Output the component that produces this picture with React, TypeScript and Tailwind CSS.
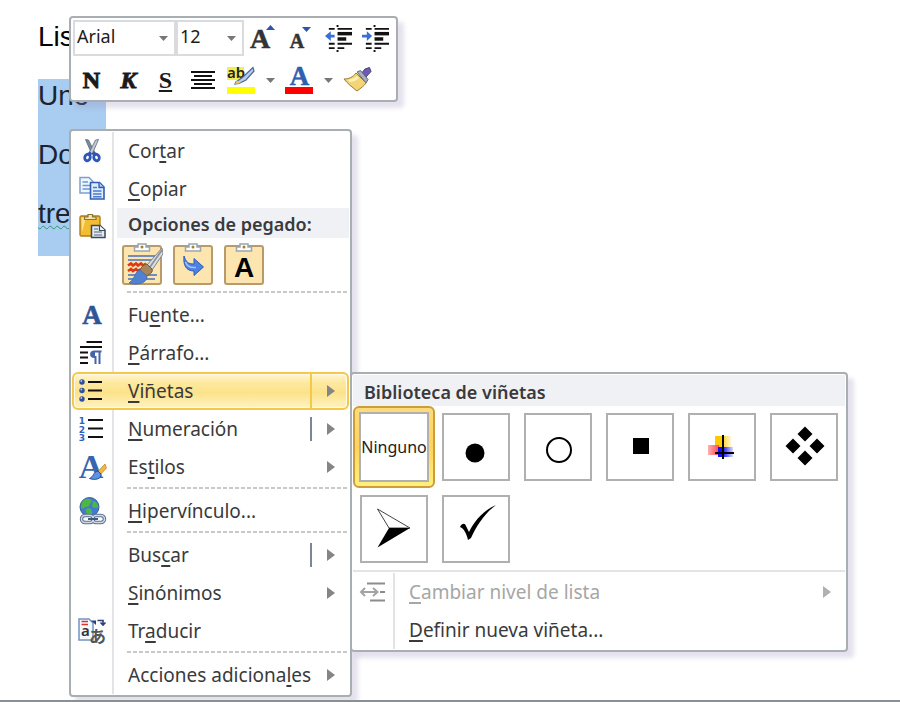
import React from "react";

type IconProps = { children: React.ReactNode; size?: number };

function Icon({ children, size = 28 }: IconProps) {
  return (
    <svg width={size} height={size} viewBox="0 0 28 28" fill="none" overflow="visible" aria-hidden="true">
      {children}
    </svg>
  );
}

/* Menu icons */

const CutIcon = () => (
  <Icon>
    <path d="M7.5 2.5 L10.5 3 L16.5 15 L14 17.5 Z" fill="#7d8a99" stroke="#5b6775" strokeWidth="0.8" />
    <path d="M20.5 2.5 L17.5 3 L11.5 15 L14 17.5 Z" fill="#c3ccd6" stroke="#5b6775" strokeWidth="0.8" />
    <path d="M13 15.5 L10 18 M15 15.5 L18 18" stroke="#2d56b8" strokeWidth="3.4" />
    <ellipse cx="9.5" cy="20.5" rx="2.7" ry="3.3" stroke="#2d56b8" strokeWidth="2.8" transform="rotate(20 9.5 20.5)" />
    <ellipse cx="18.5" cy="20.5" rx="2.7" ry="3.3" stroke="#2d56b8" strokeWidth="2.8" transform="rotate(-20 18.5 20.5)" />
  </Icon>
);

const CopyIcon = () => (
  <Icon>
    <path d="M2 2.5 H11 L15 6.5 V18 H2 Z" fill="#f0f6fe" stroke="#7d9fd0" strokeWidth="1.5" />
    <path d="M4.5 7 H10 M4.5 10.5 H12 M4.5 14 H12" stroke="#6d97d6" strokeWidth="1.5" />
    <path d="M12.5 7.5 H21.5 L26 12 V24 H12.5 Z" fill="#dfeafb" stroke="#2f5fb5" strokeWidth="1.6" />
    <path d="M21 7.5 V12.5 H26" fill="#a8c5ee" stroke="#2f5fb5" strokeWidth="1.3" />
    <path d="M15 12.5 H19 M15 16 H23.5 M15 19 H23.5 M15 21.8 H23.5" stroke="#4a7cd0" strokeWidth="1.5" />
  </Icon>
);

const PasteIcon = () => (
  <Icon>
    <rect x="2" y="4" width="20" height="20" rx="1.5" fill="#f3bd32" stroke="#b07d17" strokeWidth="1.4" />
    <path d="M3.5 5.5 H8 L4 20 Z" fill="#fde28a" />
    <path d="M6.5 7.5 V5 H10 V2.5 H14.5 V5 H18 V7.5 Z" fill="#f5e6b0" stroke="#8a7434" strokeWidth="1.2" />
    <path d="M13.5 13.5 H22 L27 18 V25.5 H13.5 Z" fill="#e4eaf2" stroke="#3a4a5f" strokeWidth="1.5" />
    <path d="M21.5 13.5 V18.5 H27" fill="#fff" stroke="#3a4a5f" strokeWidth="1.2" />
    <path d="M16 17 H20 M16 20 H24 M16 23 H24" stroke="#53657d" strokeWidth="1.2" />
  </Icon>
);

const FontIcon = () => (
  <Icon>
    <text x="14" y="23" textAnchor="middle" fontFamily="Liberation Serif, serif" fontWeight="700" fontSize="27" fill="#2f5597" stroke="#2f5597" strokeWidth="0.6">A</text>
  </Icon>
);

const ParagraphIcon = () => (
  <Icon>
    <path d="M8.5 3 H24 M2 8 H24 M2 13.5 H10 M2 18.5 H10 M2 24 H10" stroke="#111" strokeWidth="2" />
    <path d="M23.5 12.5 H16.5 C12 12.5 12 18 16.5 18 H17.5 V25 M21.5 12.5 V25" stroke="#4464a8" strokeWidth="2" />
    <path d="M17 12.5 C12.5 12.5 12.5 18 17 18 Z" fill="#4464a8" />
  </Icon>
);

const BulletsIcon = () => (
  <Icon>
    {[5, 13.5, 22].map((y) => (
      <g key={y}>
        <circle cx="4" cy={y} r="2.7" fill="#2c4fa0" />
        <circle cx="3.3" cy={y - 1} r="0.9" fill="#b5c8f0" />
        <path d={`M10 ${y} H24`} stroke="#111" strokeWidth="2" />
      </g>
    ))}
  </Icon>
);

const NumberingIcon = () => (
  <Icon>
    {["1", "2", "3"].map((n, i) => (
      <g key={n}>
        <text x="4" y={9 + i * 8.5} textAnchor="middle" fontFamily="DejaVu Sans, sans-serif" fontWeight="700" fontSize="9" fill="#2f5fc0">{n}</text>
        <path d={`M10 ${5 + i * 8.5} H25`} stroke="#111" strokeWidth="2" />
      </g>
    ))}
  </Icon>
);

const StylesIcon = () => (
  <Icon>
    <text x="13" y="25" textAnchor="middle" fontFamily="Liberation Serif, serif" fontWeight="700" fontSize="34" fill="#3766b0">A</text>
    <path d="M27 11 L20 18.5 L22.5 21.5 L28.500 15 Z" fill="#f1b83f" stroke="#b87e20" strokeWidth="0.7" />
    <path d="M20 18 C15 19 16 23.500 11.5 25.5 C17 27.5 24 26 23 21 Z" fill="#5c93e0" stroke="#214a9c" strokeWidth="1" />
  </Icon>
);

const LinkIcon = () => (
  <Icon>
    <circle cx="11.5" cy="10" r="9.5" fill="#3f7bd0" stroke="#3a5f96" strokeWidth="1" />
    <path d="M4 5 C7 1 12 1 14 4 C12 6 12.5 8 9.5 10 C7 9 6 13 3 11 Z" fill="#4fb544" />
    <path d="M15 4 C19 4 20 8 20.5 11 C17.5 10 16 12 14 9 Z M8 12 C12 10 15.5 13 13.5 18 C10 19 7 16 8 12 Z" fill="#4fb544" />
    <rect x="3.5" y="18.500" width="12" height="7" rx="3.5" stroke="#5b6f8f" strokeWidth="3.4" />
    <rect x="14.5" y="18.500" width="12" height="7" rx="3.5" stroke="#5b6f8f" strokeWidth="3.4" />
    <rect x="3.5" y="18.500" width="12" height="7" rx="3.5" stroke="#cfd9e8" strokeWidth="1.5" />
    <rect x="14.5" y="18.500" width="12" height="7" rx="3.5" stroke="#cfd9e8" strokeWidth="1.5" />
    <path d="M10 22 H20" stroke="#44587a" strokeWidth="2" />
  </Icon>
);

const TranslateIcon = () => (
  <Icon>
    <path d="M1 2 H11 L15 6 V23 H1 Z" fill="#f5f9ff" stroke="#7293c4" strokeWidth="1.5" />
    <path d="M3.5 4.5 H10 M3.5 7.5 H10" stroke="#d8352c" strokeWidth="1.7" />
    <path d="M13 3.5 H18 V8 Z" fill="#2b3f78" />
    <path d="M19.500 3.500 H25 V7 M22.5 5.500 L25 8 L27.5 5.500" stroke="#2b3f78" strokeWidth="1.6" />
    <text x="7.5" y="19" textAnchor="middle" fontFamily="Noto Sans, sans-serif" fontWeight="600" fontSize="15" fill="#333">a</text>
    <text x="19.5" y="26" textAnchor="middle" fontFamily="Noto Sans CJK JP, sans-serif" fontWeight="700" fontSize="17" fill="#555">あ</text>
  </Icon>
);

const LevelIcon = () => (
  <Icon>
    <path d="M8 5.5 H26 M21 14 H26 M11 22.5 H26" stroke="#8c8c8c" strokeWidth="2" />
    <path d="M2 14 H19 M6 10 L2 14 L6 18 M14 10 L18.5 14 L14 18" stroke="#a3a3a3" strokeWidth="2" />
  </Icon>
);

/* Paste option pictures */

function Clipboard({ children }: { children: React.ReactNode }) {
  return (
    <svg width="41" height="43" viewBox="0 0 41 43" fill="none" aria-hidden="true">
      <rect x="1" y="3" width="38" height="38" rx="2" fill="#fde5b0" stroke="#b99a6b" strokeWidth="2" />
      <path d="M12.5 8 V4 H16 V1 H24 V4 H27.5 V8 Z" fill="#fff" stroke="#9aa5ae" strokeWidth="1.5" />
      <circle cx="20" cy="4" r="1.5" fill="#a3812f" />
      {children}
    </svg>
  );
}

const KeepFormat = () => (
  <Clipboard>
    <path d="M6 13 H33 M6 17 H33 M6 32 H35 M6 36 H33" stroke="#4571b8" strokeWidth="1.7" />
    <path d="M6 22.500 l3 -2 l2 2 l3 -2 l2 2 l3 -2 l2 2 l3 -2 M6 28 l3 -2 l2 2 l3 -2 l2 2 l3 -2" stroke="#d93a17" strokeWidth="2.6" />
    <path d="M40 5 L25 22 L30 27 L41 11 Z" fill="#d9dde1" stroke="#7f868e" strokeWidth="1" />
    <path d="M40 7 L28 24" stroke="#8b9299" strokeWidth="1.7" />
    <path d="M25 21 C20 22 19 25 18 28 L24 33 C29 31 31 29 30 26 Z" fill="#a8855a" stroke="#765b39" strokeWidth="1" />
    <path d="M18 27 C13 28 13 36 7 40 C15 43 26 40 25 33 Z" fill="#4f82d2" stroke="#4268ae" strokeWidth="0.8" />
  </Clipboard>
);

const MergeFormat = () => (
  <Clipboard>
    <path d="M11 13 C13 19 15 21 21 21 V15.500 L30.500 24 L21 32.500 V28 C13 28 10 22 11 13 Z" fill="#4d82e2" stroke="#2f5db8" strokeWidth="1" />
    <path d="M12.5 19 C14 24 18 25 23 24.5" stroke="#a4c4fa" strokeWidth="1.5" />
  </Clipboard>
);

const TextOnly = () => (
  <Clipboard>
    <text x="20" y="34" textAnchor="middle" fontFamily="Liberation Sans, sans-serif" fontWeight="700" fontSize="28" fill="#000">A</text>
  </Clipboard>
);

/* Shared menu parts */

const menuFrame =
  "absolute rounded border-2 border-[#a9aeb3] bg-white p-px shadow-[6px_6px_4px_rgba(150,140,185,0.25)]";

function Triangle({ className }: { className: string }) {
  return (
    <svg width="8" height="12" viewBox="0 0 8 12" className={className} aria-hidden="true">
      <path d="M0 0 L8 6 L0 12 Z" fill="currentColor" />
    </svg>
  );
}

type ItemProps = {
  icon?: React.ReactNode;
  before?: string;
  hot: string;
  after: string;
  arrow?: boolean;
  split?: boolean;
  active?: boolean;
  disabled?: boolean;
};

function MenuItem({ icon, before = "", hot, after, arrow, split, active, disabled }: ItemProps) {
  return (
    <button
      type="button"
      role="menuitem"
      disabled={disabled}
      className={`flex h-[38px] w-full items-stretch text-left text-[19px] leading-7 ${
        active
          ? "rounded-md border-2 border-[#f3c84b] bg-[linear-gradient(180deg,#fff6d2_0%,#fde9a0_25%,#fce28a_55%,#fff3c4_100%)] shadow-[inset_0_0_0_1px_#fffbe8]"
          : ""
      } ${disabled ? "text-[#a6a6a6]" : "text-[#3a3a3c]"}`}
    >
      <span
        className={`flex shrink-0 items-center border-r-2 ${
          active ? "w-[40px] border-transparent pl-[4px]" : "w-[42px] border-[#e2e4e8] pl-[6px]"
        }`}
      >
        {icon}
      </span>
      <span className="flex flex-1 items-center pl-[14px] whitespace-nowrap">
        <span>
          {before}
          <u className="decoration-2 underline-offset-3">{hot}</u>
          {after}
        </span>
      </span>
      {split && <span className={active ? "w-[2px] bg-[#f3c84b]" : "my-[7px] w-[2px] bg-[#7b8794]"} />}
      {arrow && (
        <span
          className={`flex items-center ${active ? "w-[35px] pl-[15px]" : split ? "w-[37px] pl-[15px]" : "w-[22px]"}`}
        >
          <Triangle className={disabled ? "text-[#b0b0b0]" : "text-[#858585]"} />
        </span>
      )}
    </button>
  );
}

function Separator() {
  return (
    <div role="separator" className="flex h-[6px]">
      <span className="w-[42px] shrink-0 border-r-2 border-[#e2e4e8]" />
      <span className="mt-px ml-[13px] h-[2px] flex-1 bg-[repeating-linear-gradient(90deg,#c9c9c9_0_4px,transparent_4px_6px)]" />
    </div>
  );
}

function ContextMenu() {
  return (
    <div role="menu" className={`${menuFrame} top-[129px] left-[69px] z-10 w-[283px]`}>
      <MenuItem icon={<CutIcon />} before="Cor" hot="t" after="ar" />
      <MenuItem icon={<CopyIcon />} hot="C" after="opiar" />
      <div className="flex h-[82px]">
        <span className="w-[42px] shrink-0 border-r-2 border-[#e2e4e8] pt-1 pl-[6px]">
          <PasteIcon />
        </span>
        <div className="flex-1">
          <h2 className="ml-[3px] flex h-[30px] items-center bg-[#f0f1f5] pt-[2px] pl-[11px] text-lg font-semibold text-[#3a3a3c]">
            Opciones de pegado:
          </h2>
          <div className="flex gap-[10px] pt-[5px] pl-[8px]">
            <button type="button" aria-label="Mantener formato de origen"><KeepFormat /></button>
            <button type="button" aria-label="Combinar formato"><MergeFormat /></button>
            <button type="button" aria-label="Mantener solo texto"><TextOnly /></button>
          </div>
        </div>
      </div>
      <Separator />
      <MenuItem icon={<FontIcon />} before="Fu" hot="e" after="nte..." />
      <MenuItem icon={<ParagraphIcon />} hot="P" after="árrafo..." />
      <MenuItem icon={<BulletsIcon />} hot="V" after="iñetas" arrow split active />
      <MenuItem icon={<NumberingIcon />} hot="N" after="umeración" arrow split />
      <MenuItem icon={<StylesIcon />} before="Es" hot="t" after="ilos" arrow />
      <Separator />
      <MenuItem icon={<LinkIcon />} hot="H" after="ipervínculo..." />
      <Separator />
      <MenuItem before="Bus" hot="c" after="ar" arrow split />
      <MenuItem hot="S" after="inónimos" arrow />
      <MenuItem icon={<TranslateIcon />} before="Tr" hot="a" after="ducir" />
      <Separator />
      <MenuItem before="Acciones adiciona" hot="l" after="es" arrow />
    </div>
  );
}

/* Bullet library */

const bullets: { name: string; art: React.ReactNode }[] = [
  { name: "Círculo relleno", art: <circle cx="33" cy="40" r="9.5" /> },
  { name: "Círculo", art: <circle cx="35" cy="37" r="12" fill="none" stroke="#000" strokeWidth="2" /> },
  { name: "Cuadrado", art: <rect x="27" y="25" width="16" height="16" /> },
  {
    name: "Cruz de colores",
    art: (
      <>
        <defs>
          <linearGradient id="gold"><stop offset="0.35" stopColor="#ffc900" /><stop offset="1" stopColor="#fff8d8" /></linearGradient>
          <linearGradient id="rose"><stop offset="0" stopColor="#ffb0b0" /><stop offset="1" stopColor="#ff4a55" /></linearGradient>
          <linearGradient id="azure"><stop offset="0.3" stopColor="#1010ff" /><stop offset="1" stopColor="#dcdcff" /></linearGradient>
        </defs>
        <rect x="27" y="23" width="16" height="11" fill="url(#gold)" />
        <rect x="20" y="32" width="11" height="10" fill="url(#rose)" />
        <rect x="30" y="34" width="15" height="10" fill="url(#azure)" />
        <path d="M35 22 V46 M27 40 H46" stroke="#000" strokeWidth="2" />
      </>
    ),
  },
  {
    name: "Rombos",
    art: <path d="M35 13.500 l7.500 7.500 l-7.500 7.500 l-7.500 -7.500 Z M23 25.500 l7.500 7.500 l-7.500 7.500 l-7.500 -7.500 Z M47 25.500 l7.500 7.500 l-7.500 7.500 l-7.500 -7.500 Z M35 37.500 l7.500 7.500 l-7.500 7.500 l-7.500 -7.500 Z" />,
  },
  {
    name: "Flecha",
    art: (
      <>
        <path d="M17.500 14 L50 33 H29 Z" fill="#fff" stroke="#444" strokeWidth="1" />
        <path d="M29 33 H50 L17.500 52.500 Z" />
      </>
    ),
  },
  { name: "Marca", art: <path d="M18 32 C20 28 23 28 24 31 L27 37 C33 25 42 15 54 10 C43 18 35 30 29 43 L26 45 C25 40 22 33 18 32 Z" /> },
];

function BulletMenu() {
  return (
    <div role="menu" className={`${menuFrame} top-[372px] left-[350px] z-20 w-[498px]`}>
      <h2 className="flex h-[31px] items-center bg-[#f0f1f5] pt-[3px] pl-[11px] text-lg font-semibold text-[#3a3a3c]">
        Biblioteca de viñetas
      </h2>
      <div className="grid grid-cols-6">
        <button
          type="button"
          className="aspect-square rounded-md border-2 border-[#cd9c3b] bg-linear-to-b from-[#fbdc7c] via-[#ffd35c] to-[#fff07c] p-[4px]"
        >
          <span className="flex h-full items-center justify-center border-2 border-[#b0b0b0] bg-white text-base whitespace-nowrap text-[#1c1c1c]">
            Ninguno
          </span>
        </button>
        {bullets.map((b) => (
          <button key={b.name} type="button" aria-label={b.name} className="aspect-square p-[7px]">
            <span className="block h-full border-2 border-[#b0b0b0] bg-white">
              <svg viewBox="2 2 64 64" className="h-full w-full" aria-hidden="true">{b.art}</svg>
            </span>
          </button>
        ))}
      </div>
      <hr className="mb-px border-t-2 border-[#e4e4e6]" />
      <MenuItem icon={<LevelIcon />} hot="C" after="ambiar nivel de lista" arrow disabled />
      <MenuItem hot="D" after="efinir nueva viñeta..." />
    </div>
  );
}

/* Floating format bar */

const Caret = ({ className = "" }: { className?: string }) => (
  <svg width="9" height="5" viewBox="0 0 9 5" className={className} aria-hidden="true">
    <path d="M0 0 H9 L4.5 5 Z" fill="#777" />
  </svg>
);

function Picker({ label, value, width }: { label: string; value: string; width: string }) {
  return (
    <label className={`relative block h-[36px] border-2 border-[#d9dbdf] bg-white ${width}`}>
      <select
        aria-label={label}
        defaultValue={value}
        className="h-full w-full appearance-none bg-transparent pb-[4px] pl-[2px] text-lg text-[#1c1c1c]"
      >
        <option>{value}</option>
      </select>
      <Caret className="pointer-events-none absolute top-[14px] right-[6px]" />
    </label>
  );
}

function Tool({ label, width, children }: { label: string; width: string; children: React.ReactNode }) {
  return (
    <button type="button" aria-label={label} className={`flex h-[36px] items-center justify-center ${width}`}>
      {children}
    </button>
  );
}

const serif = "Liberation Serif, serif";

function IndentIcon({ out }: { out?: boolean }) {
  return (
    <Icon size={27}>
      <path d="M4 4 H10 M13 4 H28 M4 19.500 H10 M13 19.500 H28 M4 24 H10 M13 24 H20" stroke="#111" strokeWidth="2" />
      <path d="M13 9 H28" stroke="#111" strokeWidth="3.6" />
      <path d="M13 14.5 H22" stroke="#111" strokeWidth="3.6" />
      <path d="M13 0 V2 M13 26 V28" stroke="#111" strokeWidth="2" />
      {out ? (
        <path d="M0 11.5 L6 6.5 V10 H10 V13 H6 V16.5 Z" fill="#3a6fd8" />
      ) : (
        <path d="M10.5 11.5 L5 6.5 V10 H0 V13 H5 V16.5 Z" fill="#3a6fd8" />
      )}
    </Icon>
  );
}

function FormatBar() {
  return (
    <div role="toolbar" className={`${menuFrame} top-[16px] left-[69px] z-10 w-[329px] pl-[2px]`}>
      <div className="flex items-center pt-px">
        <Picker label="Fuente" value="Arial" width="w-[103px]" />
        <Picker label="Tamaño" value="12" width="w-[68px]" />
        <Tool label="Agrandar fuente" width="w-[38px]">
          <Icon>
            <text x="11" y="24" textAnchor="middle" fontFamily={serif} fontWeight="700" fontSize="28" fill="#333" stroke="#333" strokeWidth="0.5">A</text>
            <path d="M17 6 L21.5 1 L26 6 Z" fill="#2b56ad" />
          </Icon>
        </Tool>
        <Tool label="Encoger fuente" width="w-[38px]">
          <Icon>
            <text x="10" y="24" textAnchor="middle" fontFamily={serif} fontWeight="700" fontSize="20" fill="#333" stroke="#333" strokeWidth="0.5">A</text>
            <path d="M15 3 H24 L19.5 8 Z" fill="#2b56ad" />
          </Icon>
        </Tool>
        <Tool label="Disminuir sangría" width="w-[37px]"><IndentIcon out /></Tool>
        <Tool label="Aumentar sangría" width="w-[37px]"><IndentIcon /></Tool>
      </div>
      <div className="flex items-center pt-[6px] pb-px font-['Liberation_Serif',serif] text-2xl font-bold text-[#1a1a1a]">
        <Tool label="Negrita" width="w-[37px]"><span className="[-webkit-text-stroke:1px]">N</span></Tool>
        <Tool label="Cursiva" width="w-[37px]"><span className="italic [-webkit-text-stroke:1px]">K</span></Tool>
        <Tool label="Subrayado" width="w-[37px]"><span className="underline decoration-2 underline-offset-2">S</span></Tool>
        <Tool label="Centrar" width="w-[37px]">
          <Icon>
            <path d="M2 6 H26 M5 10 H23 M2 14 H26 M5 18 H23 M2 22 H26" stroke="#111" strokeWidth="2" />
          </Icon>
        </Tool>
        <Tool label="Color de resaltado" width="w-[40px]">
          <Icon>
            <rect x="0" y="1" width="17" height="13" fill="#f4ee52" />
            <text x="0" y="12" fontFamily="Noto Sans, sans-serif" fontWeight="600" fontSize="15" fill="#222">ab</text>
            <path d="M26 1.5 L16 11 L9 16 L8 18 L12 17.5 L19 14 L27 5 Z" fill="#b7cdec" stroke="#4b6996" strokeWidth="1.2" />
            <path d="M8 18 L10 14.5 L14 17 Z" fill="#e8c56a" />
            <rect x="0" y="21" width="28" height="7" fill="#ff0" />
          </Icon>
        </Tool>
        <Tool label="Colores de resaltado" width="w-[18px]"><Caret /></Tool>
        <Tool label="Color de fuente" width="w-[40px]">
          <Icon>
            <text x="14.5" y="19" textAnchor="middle" fontFamily={serif} fontWeight="700" fontSize="27" fill="#2f5fb0" stroke="#2f5fb0" strokeWidth="0.5">A</text>
            <rect x="0" y="21" width="28" height="7" fill="red" />
          </Icon>
        </Tool>
        <Tool label="Colores de fuente" width="w-[18px]"><Caret /></Tool>
        <Tool label="Copiar formato" width="w-[40px]">
          <Icon>
            <path d="M22 3 L26.5 1.5 L28 5.5 L22 12 L18 8 Z" fill="#6f5bb5" stroke="#46407c" strokeWidth="1" />
            <path d="M14 6 L17.5 4.5 L25 13.5 L23 17 Z" fill="#a9b0ba" stroke="#5f6670" strokeWidth="1" />
            <path d="M13 7 L23 17 C21 20 18 22 14 25 C10 22 4 17 1 13 C6 13 10 11 13 7 Z" fill="#f3d578" stroke="#9a7a35" strokeWidth="1" />
            <path d="M5 14 C9 13 12 12 14 10 L16 12 C13 15 10 15.5 7 16 Z" fill="#fff2b8" />
          </Icon>
        </Tool>
      </div>
    </div>
  );
}

export default function App() {
  return (
    <main className="relative min-h-screen overflow-hidden border-b-2 border-[#8b9095] bg-white font-['Noto_Sans','Open_Sans',sans-serif]">
      <article className="pt-[20px] pl-[38px] font-['Liberation_Sans',sans-serif] text-[28px] leading-[34px] text-[#1b2430]">
        <p className="h-[59px] text-black">Lista</p>
        <div className="w-17 bg-[#a9ccf1]">
          <p className="h-[59px]">Uno</p>
          <p className="h-[59px]">Dos</p>
          <p className="h-[59px]">
            <span className="underline decoration-[#2f9a6a] decoration-wavy decoration-1 underline-offset-2">tres</span>
          </p>
        </div>
      </article>
      <FormatBar />
      <ContextMenu />
      <BulletMenu />
    </main>
  );
}
